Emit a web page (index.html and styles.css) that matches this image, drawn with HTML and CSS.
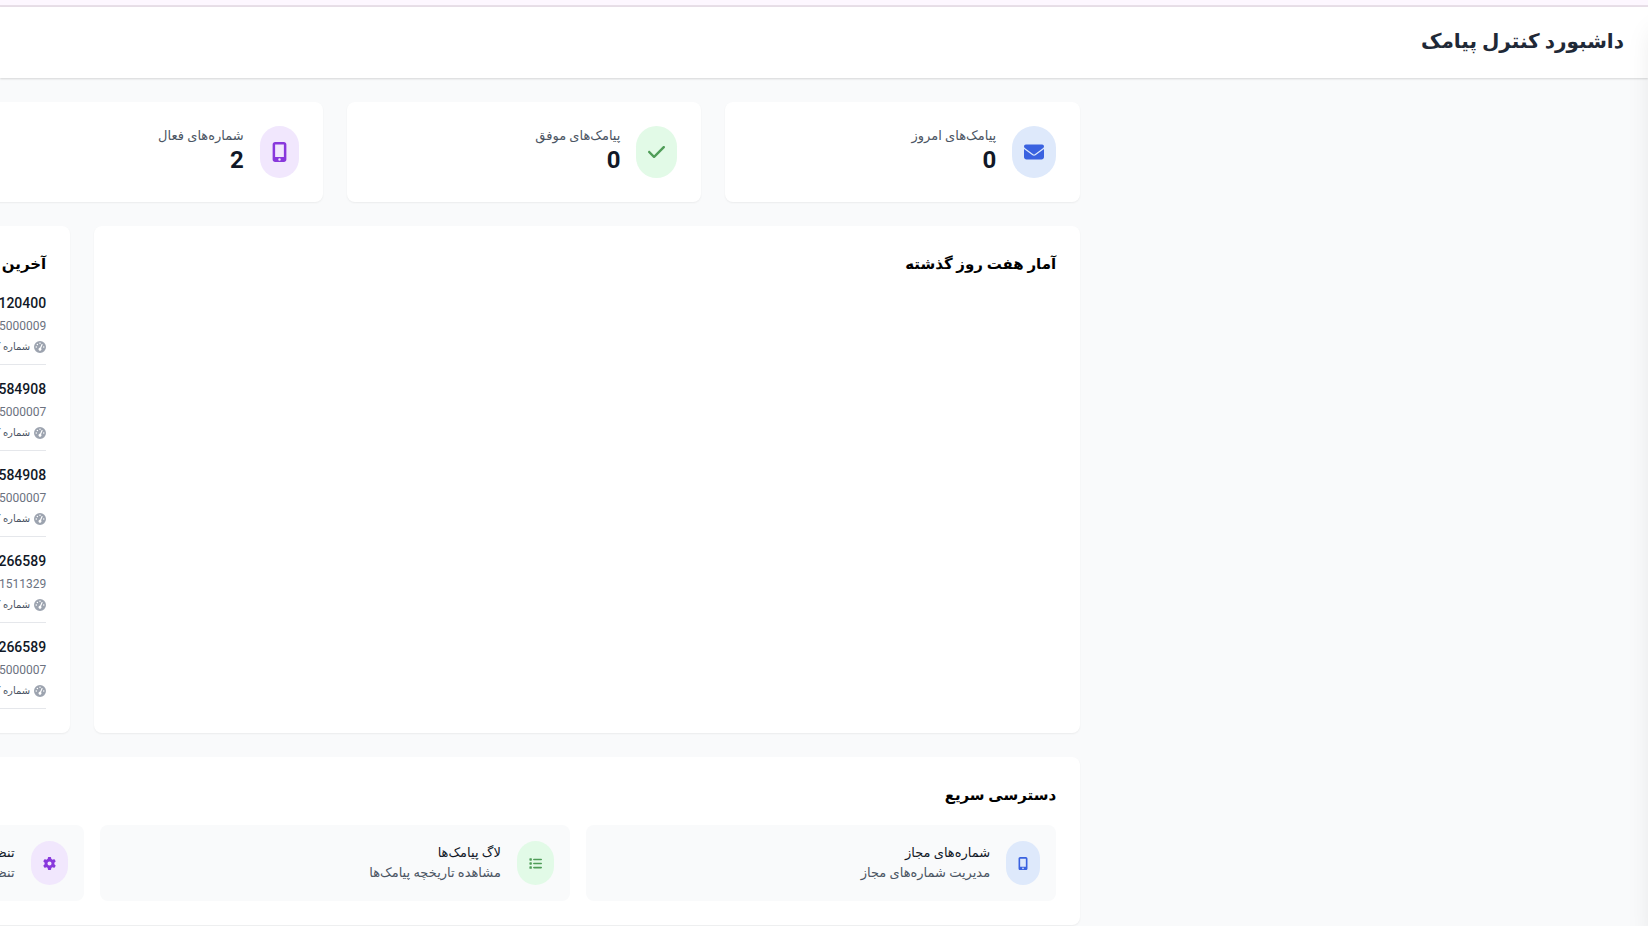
FILE: index.html
```html
<!DOCTYPE html>
<html lang="fa" dir="rtl">
<head>
    <meta charset="UTF-8">
    <meta name="viewport" content="width=device-width, initial-scale=1.0">
    <title>داشبورد کنترل پیامک</title>
    <link rel="stylesheet" href="styles.css">
</head>
<body>

    <!-- Icon shapes, reused below -->
    <svg class="icon-defs" aria-hidden="true">
        <symbol id="envelope" viewBox="0 0 512 512"><path d="M48 64C21.5 64 0 85.5 0 112c0 15.1 7.1 29.3 19.2 38.4L236.8 313.6c11.4 8.5 27 8.5 38.4 0L492.8 150.4c12.1-9.1 19.2-23.3 19.2-38.4c0-26.5-21.5-48-48-48H48zM0 176V384c0 35.3 28.7 64 64 64H448c35.3 0 64-28.7 64-64V176L294.4 339.2c-22.8 17.1-54 17.1-76.8 0L0 176z"/></symbol>
        <symbol id="check" viewBox="0 0 448 512"><path d="M438.6 105.4c12.5 12.5 12.5 32.8 0 45.3l-256 256c-12.5 12.5-32.8 12.5-45.3 0l-128-128c-12.5-12.5-12.5-32.8 0-45.3s32.8-12.5 45.3 0L160 338.7 393.4 105.4c12.5-12.5 32.8-12.5 45.3 0z"/></symbol>
        <symbol id="mobile" viewBox="0 0 384 512"><path fill-rule="evenodd" d="M16 64C16 28.7 44.7 0 80 0H304c35.3 0 64 28.7 64 64V448c0 35.3-28.7 64-64 64H80c-35.3 0-64-28.7-64-64V64zM160 448a32 32 0 1 0 64 0 32 32 0 1 0-64 0zM304 64H80V384H304V64z"/></symbol>
        <symbol id="list" viewBox="0 0 512 512"><path d="M40 48h48a24 24 0 0 1 24 24v48a24 24 0 0 1-24 24H40a24 24 0 0 1-24-24V72a24 24 0 0 1 24-24zM192 64H480a32 32 0 0 1 0 64H192a32 32 0 0 1 0-64zM192 224H480a32 32 0 0 1 0 64H192a32 32 0 0 1 0-64zM192 384H480a32 32 0 0 1 0 64H192a32 32 0 0 1 0-64zM40 208h48a24 24 0 0 1 24 24v48a24 24 0 0 1-24 24H40a24 24 0 0 1-24-24V232a24 24 0 0 1 24-24zM40 368h48a24 24 0 0 1 24 24v48a24 24 0 0 1-24 24H40a24 24 0 0 1-24-24V392a24 24 0 0 1 24-24z"/></symbol>
        <symbol id="gear" viewBox="0 0 512 512"><path fill-rule="evenodd" d="M495.9 166.6c3.2 8.7 .5 18.4-6.4 24.6l-43.3 39.4c1.1 8.3 1.7 16.8 1.7 25.4s-.6 17.1-1.7 25.4l43.3 39.4c6.9 6.2 9.6 15.9 6.4 24.6c-4.4 11.9-9.7 23.3-15.8 34.3l-4.7 8.1c-6.6 11-14 21.4-22.1 31.2c-5.9 7.2-15.7 9.6-24.5 6.8l-55.7-17.7c-13.4 10.3-28.2 18.9-44 25.4l-12.5 57.1c-2 9.1-9 16.3-18.2 17.8c-13.8 2.3-28 3.5-42.5 3.5s-28.7-1.2-42.5-3.5c-9.2-1.5-16.2-8.7-18.2-17.8l-12.5-57.1c-15.8-6.5-30.6-15.1-44-25.4L83.1 425.9c-8.8 2.8-18.6 .3-24.5-6.8c-8.1-9.8-15.5-20.2-22.1-31.2l-4.7-8.1c-6.1-11-11.4-22.4-15.8-34.3c-3.2-8.7-.5-18.4 6.4-24.6l43.3-39.4C64.6 273.1 64 264.6 64 256s.6-17.1 1.7-25.4L22.4 191.2c-6.9-6.2-9.6-15.9-6.4-24.6c4.4-11.9 9.7-23.3 15.8-34.3l4.7-8.1c6.6-11 14-21.4 22.1-31.2c5.9-7.2 15.7-9.6 24.5-6.8l55.7 17.7c13.4-10.3 28.2-18.9 44-25.4l12.5-57.1c2-9.1 9-16.3 18.2-17.8C227.3 1.2 241.5 0 256 0s28.7 1.2 42.5 3.5c9.2 1.5 16.2 8.7 18.2 17.8l12.5 57.1c15.8 6.5 30.6 15.1 44 25.4l55.7-17.7c8.8-2.8 18.6-.3 24.5 6.8c8.1 9.8 15.5 20.2 22.1 31.2l4.7 8.1c6.1 11 11.4 22.4 15.8 34.3zM256 336a80 80 0 1 0 0-160 80 80 0 1 0 0 160z"/></symbol>
        <symbol id="gauge" viewBox="0 0 512 512"><path fill-rule="evenodd" d="M0 256a256 256 0 1 1 512 0A256 256 0 1 1 0 256zM288 96a32 32 0 1 0-64 0 32 32 0 1 0 64 0zM256 416c35.3 0 64-28.7 64-64c0-17.4-6.9-33.1-18.1-44.6L366 161.7c5.3-12.1-.2-26.3-12.3-31.6s-26.3 .2-31.6 12.3L257.9 288c-.6 0-1.3 0-1.9 0c-35.3 0-64 28.7-64 64s28.7 64 64 64zM176 144a32 32 0 1 0-64 0 32 32 0 1 0 64 0zM96 288a32 32 0 1 0 0-64 32 32 0 1 0 0 64zM416 288a32 32 0 1 0 0-64 32 32 0 1 0 0 64z"/></symbol>
    </svg>

    <div class="top-strip"></div>

    <header class="header">
        <h1>داشبورد کنترل پیامک</h1>
    </header>

    <div class="drawer"></div>

    <main class="main">

        <!-- Stats -->
        <section class="stats">
            <div class="card stat">
                <span class="bubble blue"><svg class="wide"><use href="#envelope"/></svg></span>
                <div class="stat-text">
                    <p class="stat-label">پیامک‌های امروز</p>
                    <p class="stat-value">0</p>
                </div>
            </div>
            <div class="card stat">
                <span class="bubble green"><svg class="medium"><use href="#check"/></svg></span>
                <div class="stat-text">
                    <p class="stat-label">پیامک‌های موفق</p>
                    <p class="stat-value">0</p>
                </div>
            </div>
            <div class="card stat">
                <span class="bubble purple"><svg class="narrow"><use href="#mobile"/></svg></span>
                <div class="stat-text">
                    <p class="stat-label">شماره‌های فعال</p>
                    <p class="stat-value">2</p>
                </div>
            </div>
        </section>

        <!-- Weekly chart and latest messages -->
        <section class="panels">
            <div class="card chart">
                <h2>آمار هفت روز گذشته</h2>
            </div>
            <div class="card latest">
                <h2>آخرین</h2>
                <ul class="messages">
                    <li>
                        <p class="message-to">120400</p>
                        <p class="message-from">5000009</p>
                        <p class="message-type"><svg><use href="#gauge"/></svg> شماره ک</p>
                    </li>
                    <li>
                        <p class="message-to">584908</p>
                        <p class="message-from">5000007</p>
                        <p class="message-type"><svg><use href="#gauge"/></svg> شماره ک</p>
                    </li>
                    <li>
                        <p class="message-to">584908</p>
                        <p class="message-from">5000007</p>
                        <p class="message-type"><svg><use href="#gauge"/></svg> شماره ک</p>
                    </li>
                    <li>
                        <p class="message-to">266589</p>
                        <p class="message-from">1511329</p>
                        <p class="message-type"><svg><use href="#gauge"/></svg> شماره ک</p>
                    </li>
                    <li>
                        <p class="message-to">266589</p>
                        <p class="message-from">5000007</p>
                        <p class="message-type"><svg><use href="#gauge"/></svg> شماره ک</p>
                    </li>
                </ul>
            </div>
        </section>

        <!-- Quick access -->
        <section class="card quick">
            <h2>دسترسی سریع</h2>
            <nav class="links">
                <a href="#numbers" class="link">
                    <span class="bubble small blue"><svg class="narrow"><use href="#mobile"/></svg></span>
                    <span class="link-text">
                        <strong>شماره‌های مجاز</strong>
                        <span>مدیریت شماره‌های مجاز</span>
                    </span>
                </a>
                <a href="#logs" class="link">
                    <span class="bubble small green"><svg class="wide"><use href="#list"/></svg></span>
                    <span class="link-text">
                        <strong>لاگ پیامک‌ها</strong>
                        <span>مشاهده تاریخچه پیامک‌ها</span>
                    </span>
                </a>
                <a href="#settings" class="link">
                    <span class="bubble small purple"><svg class="wide"><use href="#gear"/></svg></span>
                    <span class="link-text">
                        <strong>تنظیمات</strong>
                        <span>تنظیمات</span>
                    </span>
                </a>
            </nav>
        </section>

    </main>

</body>
</html>
```
FILE: styles.css
```css
* {
    box-sizing: border-box;
    margin: 0;
    padding: 0;
}

body {
    font-family: Roboto, "DejaVu Sans", sans-serif;
    font-size: 14px;
    line-height: 20px;
    color: #111827;
    background-color: #f9fafb;
    min-height: 100vh;
    overflow-x: hidden;
}

.icon-defs {
    position: absolute;
    width: 0;
    height: 0;
}

.bubble svg,
.message-type svg {
    fill: currentColor;
}

.top-strip {
    height: 7px;
    background-color: #fdf7ff;
    border-bottom: 2px solid #e8dfe8;
}

.header {
    background-color: #fff;
    padding: 18px 24px 21px;
    box-shadow: 0 1px 2px rgba(0, 0, 0, 0.15);
}

.header h1 {
    font-size: 20px;
    line-height: 32px;
    font-weight: 700;
    color: #1f2937;
}

/* Closed side menu, only its shadow reaches the page */
.drawer {
    position: fixed;
    top: 7px;
    bottom: 0;
    left: 100%;
    width: 256px;
    box-shadow: 0 20px 25px -5px rgba(0, 0, 0, 0.1);
}

.main {
    width: calc(100% - 109px);
    margin-right: 33%;
    padding: 24px 24px 0;
}

.card {
    background-color: #fff;
    border-radius: 8px;
    box-shadow: 0 1px 2px rgba(0, 0, 0, 0.06);
}

.card h2 {
    font-size: 15px;
    line-height: 28px;
    font-weight: 700;
    color: #000;
}

/* Stats */
.stats {
    display: grid;
    grid-template-columns: repeat(4, 1fr);
    gap: 24px;
    margin-bottom: 24px;
}

.stat {
    display: flex;
    align-items: center;
    gap: 16px;
    padding: 24px;
}

.stat-text {
    padding-bottom: 4px;
}

.stat-label {
    font-size: 13px;
    line-height: 20px;
    color: #4b5563;
}

.stat-value {
    font-size: 24px;
    line-height: 28px;
    font-weight: 700;
}

.bubble {
    display: flex;
    align-items: center;
    padding: 12px;
    height: 52px;
    border-radius: 999px;
}

.bubble svg {
    height: 20px;
}

.bubble .wide {
    width: 20px;
}

.bubble .medium {
    width: 17px;
}

.bubble .narrow {
    width: 15px;
}

.bubble.small {
    height: 44px;
}

.bubble.small svg {
    height: 13px;
}

.bubble.small .wide {
    width: 13px;
}

.bubble.small .narrow {
    width: 10px;
}

.blue {
    background-color: #dee9fb;
    color: #3a62e0;
}

.green {
    background-color: #e2fae7;
    color: #4f9d58;
}

.purple {
    background-color: #f1e7fd;
    color: #8838dc;
}

/* Panels */
.panels {
    display: grid;
    grid-template-columns: repeat(3, 1fr);
    gap: 24px;
    margin-bottom: 24px;
}

.chart {
    grid-column: span 2;
    padding: 24px;
}

.latest {
    padding: 24px;
}

.messages {
    display: flex;
    flex-direction: column;
    gap: 12px;
    margin-top: 13px;
    list-style: none;
}

.messages li {
    padding-bottom: 7px;
    border-bottom: 1px solid #e5e7eb;
}

.message-to {
    font-weight: 500;
    line-height: 24px;
}

.message-from {
    font-size: 12px;
    line-height: 22px;
    color: #6b7280;
}

.message-type {
    display: flex;
    align-items: center;
    gap: 4px;
    font-size: 10px;
    color: #4b5563;
}

.message-type svg {
    width: 12px;
    height: 12px;
    color: #9ca3af;
}

/* Quick access */
.quick {
    padding: 24px;
}

.links {
    display: grid;
    grid-template-columns: repeat(3, 1fr);
    gap: 16px;
    margin-top: 16px;
}

.link {
    display: flex;
    align-items: center;
    gap: 16px;
    padding: 16px;
    border-radius: 8px;
    background-color: #f9fafb;
    color: #4b5563;
    text-decoration: none;
}

.link-text {
    display: flex;
    flex-direction: column;
    font-size: 13px;
}

.link-text strong {
    font-weight: 500;
    color: #111827;
}
```
